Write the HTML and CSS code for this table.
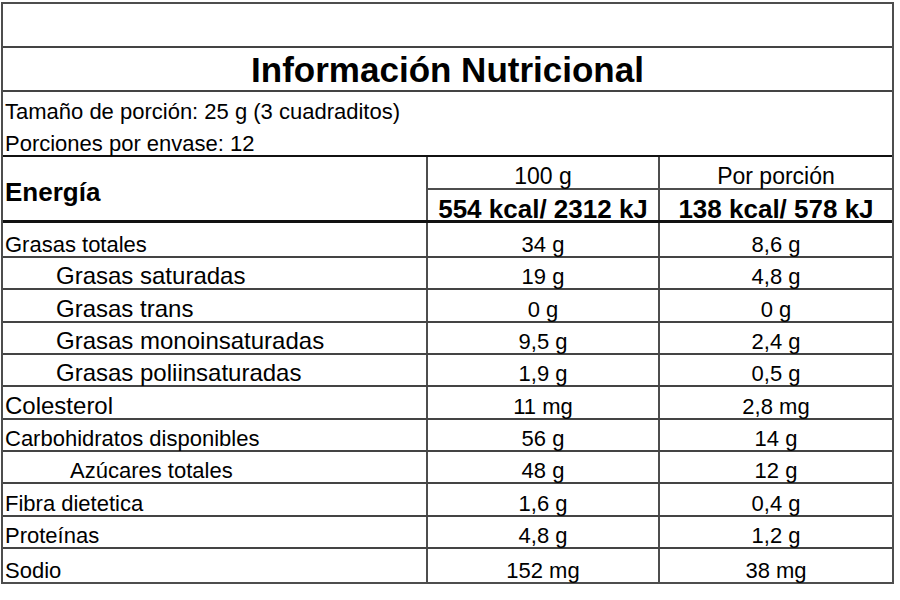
FILE: index.html
```html
<!DOCTYPE html>
<html lang="es">
<head>
<meta charset="utf-8">
<title>Información Nutricional</title>
<link rel="stylesheet" href="styles.css">
</head>
<body>
<div class="label">
  <div class="blank"></div>
  <h1 class="title">Información Nutricional</h1>
  <div class="serving">
    <p>Tamaño de porción: 25 g (3 cuadraditos)</p>
    <p>Porciones por envase: 12</p>
  </div>
  <div class="energy">
    <div class="energy-name">Energía</div>
    <div class="energy-head">100 g</div>
    <div class="energy-head">Por porción</div>
    <div class="energy-val">554 kcal/ 2312 kJ</div>
    <div class="energy-val">138 kcal/ 578 kJ</div>
  </div>
  <div class="nrow first"><div class="name">Grasas totales</div><div class="val">34 g</div><div class="val">8,6 g</div></div>
  <div class="nrow"><div class="name sub">Grasas saturadas</div><div class="val">19 g</div><div class="val">4,8 g</div></div>
  <div class="nrow"><div class="name sub">Grasas trans</div><div class="val">0 g</div><div class="val">0 g</div></div>
  <div class="nrow"><div class="name sub">Grasas monoinsaturadas</div><div class="val">9,5 g</div><div class="val">2,4 g</div></div>
  <div class="nrow"><div class="name sub">Grasas poliinsaturadas</div><div class="val">1,9 g</div><div class="val">0,5 g</div></div>
  <div class="nrow"><div class="name big">Colesterol</div><div class="val">11 mg</div><div class="val">2,8 mg</div></div>
  <div class="nrow"><div class="name">Carbohidratos disponibles</div><div class="val">56 g</div><div class="val">14 g</div></div>
  <div class="nrow"><div class="name sub2">Azúcares totales</div><div class="val">48 g</div><div class="val">12 g</div></div>
  <div class="nrow"><div class="name">Fibra dietetica</div><div class="val">1,6 g</div><div class="val">0,4 g</div></div>
  <div class="nrow"><div class="name">Proteínas</div><div class="val">4,8 g</div><div class="val">1,2 g</div></div>
  <div class="nrow last"><div class="name">Sodio</div><div class="val">152 mg</div><div class="val">38 mg</div></div>
</div>
</body>
</html>
```
FILE: styles.css
```css
* { box-sizing: border-box; }

body {
  margin: 0;
  background: #ffffff;
  font-family: "Liberation Sans", Arial, Helvetica, sans-serif;
  color: #000;
}

.label {
  width: 893px;
  margin: 2px 0 0 1px;
  border: 2px solid #4d4d4d;
}

.blank {
  height: 44px;
  border-bottom: 2px solid #444;
}

.title {
  margin: 0;
  height: 44px;
  border-bottom: 2px solid #444;
  font-size: 35px;
  font-weight: bold;
  line-height: 44px;
  text-align: center;
}

.serving {
  height: 65px;
  padding: 4px 0 0 2px;
  border-bottom: 2px solid #111;
}

.serving p {
  margin: 0;
  font-size: 22px;
  line-height: 32px;
  white-space: nowrap;
}

.energy {
  display: grid;
  grid-template-columns: 423px 232px 234px;
  grid-template-rows: 33px 30px;
  height: 66px;
  border-bottom: 3px solid #111;
}

.energy-name {
  grid-row: 1 / span 2;
  padding: 20px 0 0 2px;
  font-size: 26px;
  font-weight: bold;
  line-height: 30px;
}

.energy-head {
  display: flex;
  align-items: flex-end;
  justify-content: center;
  border-left: 2px solid #4d4d4d;
  border-bottom: 2px solid #4d4d4d;
  font-size: 23px;
  line-height: 1;
}

.energy-val {
  border-left: 2px solid #4d4d4d;
  padding-top: 4px;
  text-align: center;
  font-size: 26px;
  font-weight: bold;
  line-height: 30px;
  white-space: nowrap;
}

.nrow {
  display: grid;
  grid-template-columns: 423px 232px 234px;
  height: 32.33px;
  border-bottom: 2px solid #444;
}

.nrow.first {
  height: 35px;
}

.nrow.last {
  border-bottom: 0;
  height: 33px;
}

.name,
.val {
  display: flex;
  align-items: flex-end;
  padding-bottom: 0;
  font-size: 22px;
  line-height: 1;
  white-space: nowrap;
}

.name {
  padding-left: 2px;
}

.name.sub {
  padding-left: 53px;
  font-size: 24px;
}

.name.big {
  font-size: 24px;
}

.name.sub2 {
  padding-left: 67px;
}

.val {
  justify-content: center;
  border-left: 2px solid #4d4d4d;
}
```
